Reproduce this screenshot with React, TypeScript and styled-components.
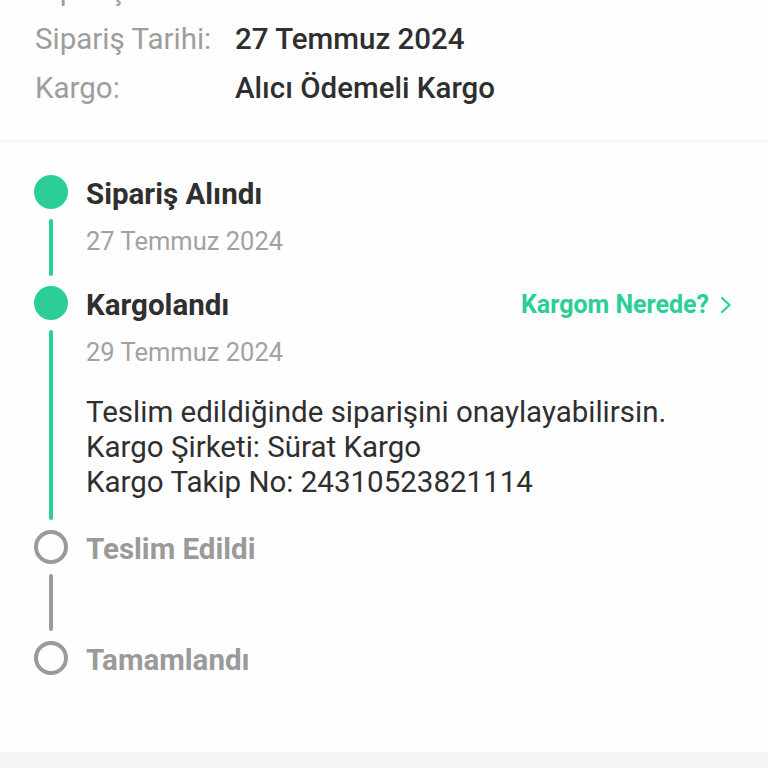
import React, { FunctionComponent } from "react";
import styled, { createGlobalStyle } from "styled-components";

const GREEN = "#2bcf96";
const GREY = "#9a9a9a";

const GlobalStyle = createGlobalStyle`
    html, body {
        margin: 0;
        padding: 0;
        background: #f5f5f5;
    }
    body {
        font-family: Roboto, "Noto Sans", Arial, sans-serif;
        color: #333;
    }
`;

type Step = {
    title: string;
    done: boolean;
    date?: string;
    lines?: string[];
    link?: string;
};

const steps: Step[] = [
    { title: "Sipariş Alındı", done: true, date: "27 Temmuz 2024" },
    {
        title: "Kargolandı",
        done: true,
        date: "29 Temmuz 2024",
        link: "Kargom Nerede?",
        lines: [
            "Teslim edildiğinde siparişini onaylayabilirsin.",
            "Kargo Şirketi: Sürat Kargo",
            "Kargo Takip No: 24310523821114",
        ],
    },
    { title: "Teslim Edildi", done: false },
    { title: "Tamamlandı", done: false },
];

// first row is scrolled mostly out of view
const info = [
    { label: "Sipariş No:", value: "" },
    { label: "Sipariş Tarihi:", value: "27 Temmuz 2024" },
    { label: "Kargo:", value: "Alıcı Ödemeli Kargo" },
];

const Chevron: FunctionComponent = () => (
    <svg width="14" height="20" viewBox="0 0 14 20" fill="none">
        <path
            d="M3 3 L10.5 10 L3 17"
            stroke={GREEN}
            strokeWidth="2.2"
            strokeLinecap="round"
            strokeLinejoin="round"
        />
    </svg>
);

export default function App() {
    return (
        <>
            <GlobalStyle />
            <Page>
                <InfoSection>
                    {info.map((row) => (
                        <InfoRow key={row.label}>
                            <Label>{row.label}</Label>
                            <Value>{row.value}</Value>
                        </InfoRow>
                    ))}
                </InfoSection>
                <Timeline>
                    {steps.map((step, i) => {
                        const next = steps[i + 1];
                        return (
                            <StepBlock key={step.title}>
                                <Dot done={step.done} />
                                <Header>
                                    <Title done={step.done}>{step.title}</Title>
                                    {step.link && (
                                        <Link>
                                            {step.link}
                                            <Chevron />
                                        </Link>
                                    )}
                                </Header>
                                {next && (
                                    <>
                                        <Connector done={next.done || step.done} />
                                        <Body>
                                            {step.date && <DateText>{step.date}</DateText>}
                                            {step.lines && (
                                                <Details>
                                                    {step.lines.map((l) => (
                                                        <div key={l}>{l}</div>
                                                    ))}
                                                </Details>
                                            )}
                                        </Body>
                                    </>
                                )}
                            </StepBlock>
                        );
                    })}
                </Timeline>
            </Page>
        </>
    );
}

const Page = styled.div`
    width: 768px;
    height: 752px;
    overflow: hidden;
    background: #fefefe;
    display: flex;
    flex-direction: column;
`;

const InfoSection = styled.section`
    margin-top: -35px;
    padding: 0 35px 28px;
    border-bottom: 2px solid #f6f6f6;
    display: flex;
    flex-direction: column;
`;

const InfoRow = styled.div`
    display: grid;
    grid-template-columns: 200px 1fr;
    height: 49px;
    align-items: center;
    font-size: 29.5px;
`;

const Label = styled.span`
    color: #9d9d9d;
`;

const Value = styled.span`
    color: #2f2f2f;
    font-weight: 500;
`;

const Timeline = styled.section`
    padding: 33px 35px 0 34px;
    display: flex;
    flex-direction: column;
`;

const StepBlock = styled.div`
    display: grid;
    grid-template-columns: 34px 1fr;
    column-gap: 18px;
`;

const Dot = styled.div<{ done: boolean }>`
    width: 34px;
    height: 34px;
    box-sizing: border-box;
    border-radius: 50%;
    background: ${({ done }) => (done ? GREEN : "transparent")};
    border: ${({ done }) => (done ? "none" : `4px solid ${GREY}`)};
`;

const Header = styled.div`
    display: flex;
    align-items: center;
    justify-content: space-between;
    height: 34px;
`;

const Title = styled.span<{ done: boolean }>`
    font-size: 29.5px;
    font-weight: 700;
    color: ${({ done }) => (done ? "#2f2f2f" : GREY)};
    padding-top: 3px;
`;

const Link = styled.span`
    display: flex;
    align-items: center;
    gap: 10px;
    color: ${GREEN};
    font-size: 25px;
    font-weight: 700;
    padding-top: 3px;
`;

const Connector = styled.div<{ done: boolean }>`
    justify-self: center;
    width: 4px;
    margin: 10px 0;
    border-radius: 2px;
    background: ${({ done }) => (done ? GREEN : GREY)};
`;

const Body = styled.div`
    min-height: 77px;
    box-sizing: border-box;
    padding: 17px 0 30px;
    display: flex;
    flex-direction: column;
`;

const DateText = styled.div`
    font-size: 25.5px;
    line-height: 30px;
    color: #a2a2a2;
`;

const Details = styled.div`
    margin-top: 28px;
    font-size: 29.5px;
    line-height: 35px;
    color: #2f2f2f;
`;
